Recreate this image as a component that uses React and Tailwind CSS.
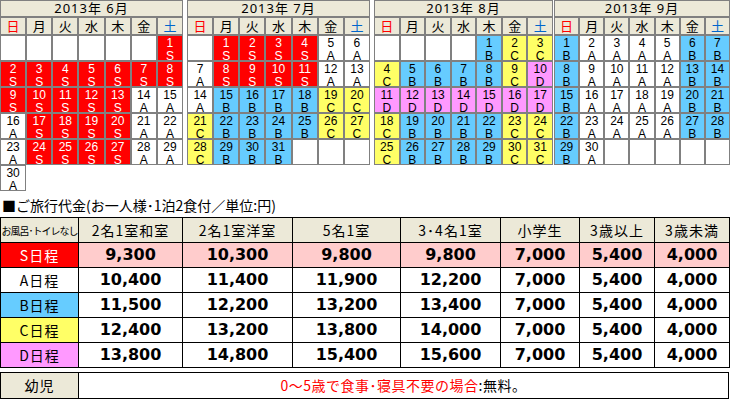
const CELL = {
  S: 'bg-[#ff0000] text-white',
  A: 'bg-white text-black',
  B: 'bg-[#66ccff] text-black',
  C: 'bg-[#ffff66] text-black',
  D: 'bg-[#ff99ff] text-black',
}

const CALENDARS = [
  { title: '2013年 6月', width: 'w-[183px]', gap: '', start: 6, codes: 'SSSSSSSSSSSSSAAASSSSAAASSSSAAA', tail: 0 },
  { title: '2013年 7月', width: 'w-[183px]', gap: 'ml-[4px]', start: 1, codes: 'SSSSAAASSSSAAABBBBCCCBBBBCCCBBB', tail: 3 },
  { title: '2013年 8月', width: 'w-[179px]', gap: 'ml-[4px]', start: 4, codes: 'BCCCBBBBCDDDDDDDDCBBBBCCCBBBBCC', tail: 0 },
  { title: '2013年 9月', width: 'w-[176px]', gap: 'ml-[1px]', start: 0, codes: 'BAAAABBBAAAABBBAAAABBBAAAABBBA', tail: 5 },
]

const WEEK = ['日', '月', '火', '水', '木', '金', '土']

const PLANS = [
  { label: 'S日程', cls: 'bg-[#ff0000] text-white', cell: 'bg-[#ffcccc]', prices: ['9,300', '10,300', '9,800', '9,800', '7,000', '5,400', '4,000'] },
  { label: 'A日程', cls: 'bg-white text-black', cell: 'bg-white', prices: ['10,400', '11,400', '11,900', '12,200', '7,000', '5,400', '4,000'] },
  { label: 'B日程', cls: 'bg-[#66ccff] text-black', cell: 'bg-white', prices: ['11,500', '12,200', '13,200', '13,400', '7,000', '5,400', '4,000'] },
  { label: 'C日程', cls: 'bg-[#ffff66] text-black', cell: 'bg-white', prices: ['12,400', '13,200', '13,800', '14,000', '7,000', '5,400', '4,000'] },
  { label: 'D日程', cls: 'bg-[#ff99ff] text-black', cell: 'bg-white', prices: ['13,800', '14,800', '15,400', '15,600', '7,000', '5,400', '4,000'] },
]

const HEADS = ['2名1室和室', '2名1室洋室', '5名1室', '3･4名1室', '小学生', '3歳以上', '3歳未満']

function Calendar({ cal }) {
  const cells = []
  for (let i = 0; i < cal.start; i++) cells.push(null)
  cal.codes.split('').forEach((c, i) => cells.push({ day: i + 1, code: c }))
  for (let i = 0; i < cal.tail; i++) cells.push(null)

  return (
    <div className={`${cal.width} ${cal.gap} grid grid-cols-7 shrink-0 font-['Noto_Sans','Noto_Sans_CJK_JP',sans-serif]`}>
      <div className="col-span-7 h-[17px] border border-[#808080] bg-[#ece9d8] flex items-center justify-center text-[13px] leading-[15px] tracking-[1px] text-black">
        {cal.title}
      </div>
      {WEEK.map((w, i) => (
        <div
          key={w}
          className={[
            'h-[18px] border border-[#808080] bg-[#ece9d8] flex items-center justify-center text-[13px] leading-[16px]',
            i === 0 ? 'text-[#ff0000]' : i === 6 ? 'text-[#0066cc]' : 'text-black',
          ].join(' ')}
        >
          {w}
        </div>
      ))}
      {cells.map((c, i) =>
        c ? (
          <div key={i} className={`h-[26px] border border-[#808080] pt-[1px] flex flex-col items-center gap-[1px] text-[12px] leading-[12px] font-['Liberation_Sans',sans-serif] ${CELL[c.code]}`}>
            <span>{c.day}</span>
            <span>{c.code}</span>
          </div>
        ) : (
          <div key={i} className="h-[26px] border border-[#808080] bg-white" />
        )
      )}
    </div>
  )
}

export default function App() {
  return (
    <div className="w-[730px] h-[404px] bg-white overflow-hidden font-['Noto_Sans_CJK_JP','Noto_Sans',sans-serif] text-black">
      <div className="flex items-start h-[192px]">
        {CALENDARS.map((cal) => (
          <Calendar key={cal.title} cal={cal} />
        ))}
      </div>

      <div className="h-[25px] pl-[2px] pt-[3px] text-[14px] leading-[20px]">
        ■ご旅行代金(お一人様･1泊2食付／単位:円)
      </div>

      <table className="table-fixed border-collapse w-[729px]">
        <colgroup>
          <col className="w-[78px]" />
          <col className="w-[104px]" />
          <col className="w-[110px]" />
          <col className="w-[108px]" />
          <col className="w-[100px]" />
          <col className="w-[79px]" />
          <col className="w-[75px]" />
          <col className="w-[75px]" />
        </colgroup>
        <thead>
          <tr className="h-[25px] bg-[#ece9d8]">
            <th className="border border-black p-0 font-normal text-[10px] tracking-[-1px] whitespace-nowrap">
              お風呂･トイレなし
            </th>
            {HEADS.map((h) => (
              <th key={h} className="border border-black p-0 font-normal text-[14px] tracking-[1px] whitespace-nowrap">
                {h}
              </th>
            ))}
          </tr>
        </thead>
        <tbody>
          {PLANS.map((p) => (
            <tr key={p.label} className="h-[25px]">
              <td className={`border border-black p-0 text-center text-[14px] tracking-[1px] ${p.cls}`}>{p.label}</td>
              {p.prices.map((v, i) => (
                <td
                  key={i}
                  className={`border border-black p-0 text-center font-['DejaVu_Sans',sans-serif] font-bold text-[16px] leading-[20px] ${p.cell}`}
                >
                  {v}
                </td>
              ))}
            </tr>
          ))}
        </tbody>
      </table>

      <table className="table-fixed border-collapse w-[729px] mt-[4px]">
        <colgroup>
          <col className="w-[78px]" />
          <col />
        </colgroup>
        <tbody>
          <tr className="h-[26px]">
            <td className="border border-black p-0 bg-[#ece9d8] text-center text-[14px] tracking-[1px]">幼児</td>
            <td className="border border-black p-0 text-center text-[14px] tracking-[0.5px]">
              <span className="text-[#ff0000]">0～5歳で食事･寝具不要の場合</span>
              <span>:無料。</span>
            </td>
          </tr>
        </tbody>
      </table>
    </div>
  )
}
